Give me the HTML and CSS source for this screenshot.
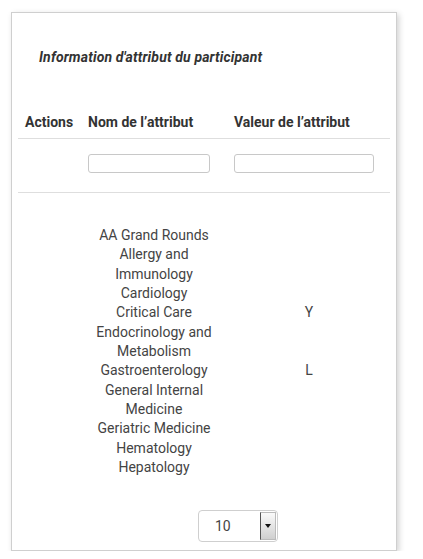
FILE: index.html
```html
<!DOCTYPE html>
<html lang="fr">
<head>
<meta charset="utf-8">
<title>Information d'attribut du participant</title>
<link rel="stylesheet" href="styles.css">
</head>
<body>
<div class="card">
  <h2 class="title">Information d'attribut du participant</h2>
  <div class="table">
    <div class="row head">
      <div class="c c1">Actions</div>
      <div class="c c2">Nom de l’attribut</div>
      <div class="c c3">Valeur de l’attribut</div>
    </div>
    <div class="row filters">
      <div class="c c1"></div>
      <div class="c c2"><input class="inp inp-name" type="text"></div>
      <div class="c c3"><input class="inp inp-val" type="text"></div>
    </div>
    <div class="body">
      <div class="item"><div class="c1"></div><div class="n">AA Grand Rounds</div><div class="v"></div></div>
      <div class="item"><div class="c1"></div><div class="n">Allergy and Immunology</div><div class="v"></div></div>
      <div class="item"><div class="c1"></div><div class="n">Cardiology</div><div class="v"></div></div>
      <div class="item"><div class="c1"></div><div class="n">Critical Care</div><div class="v">Y</div></div>
      <div class="item"><div class="c1"></div><div class="n">Endocrinology and Metabolism</div><div class="v"></div></div>
      <div class="item"><div class="c1"></div><div class="n">Gastroenterology</div><div class="v">L</div></div>
      <div class="item"><div class="c1"></div><div class="n">General Internal Medicine</div><div class="v"></div></div>
      <div class="item"><div class="c1"></div><div class="n">Geriatric Medicine</div><div class="v"></div></div>
      <div class="item"><div class="c1"></div><div class="n">Hematology</div><div class="v"></div></div>
      <div class="item"><div class="c1"></div><div class="n">Hepatology</div><div class="v"></div></div>
    </div>
  </div>
  <div class="pager">
    <div class="select">
      <span class="sel-val">10</span>
      <span class="sel-btn"><span class="arrow"></span></span>
    </div>
  </div>
</div>
</body>
</html>
```
FILE: styles.css
```css
html, body {
  margin: 0;
  padding: 0;
  background: #fff;
}
body {
  font-family: Roboto, "Liberation Sans", sans-serif;
  color: #333;
  font-size: 14px;
}
.card {
  margin: 12px 0 0 11px;
  width: 372px;
  height: 537px;
  border: 1px solid #cfcfcf;
  box-shadow: 2px 2px 6px rgba(0,0,0,0.18);
  padding: 0 6px;
  box-sizing: content-box;
  display: flex;
  flex-direction: column;
}
.title {
  margin: 35px 0 0 21px;
  font-size: 14px;
  line-height: 18px;
  font-style: italic;
  font-weight: bold;
  color: #333;
  letter-spacing: 0.15px;
}
.table {
  margin-top: 38px;
}
.row {
  display: grid;
  grid-template-columns: 64px 146px 1fr;
}
.head {
  border-bottom: 1px solid #dedede;
}
.head .c {
  padding: 9px 6px 6px 7px;
  font-weight: bold;
  font-size: 14px;
  line-height: 19px;
}
.head .c2, .head .c3 {
  padding-left: 6px;
}
.filters {
  border-bottom: 1px solid #dedede;
}
.filters .c {
  padding: 15px 0 19px 6px;
  height: 19px;
}
.inp {
  display: block;
  box-sizing: border-box;
  height: 19px;
  margin: 0;
  border: 1px solid #c8c8c8;
  border-radius: 3px;
  background: #fff;
  padding: 0 4px;
}
.inp-name { width: 122px; }
.inp-val { width: 140px; }
.body {
  padding-top: 33px;
}
.item {
  display: grid;
  grid-template-columns: 64px 146px 1fr;
  line-height: 19.33px;
  font-size: 14px;
  color: #444;
}
.item .n {
  text-align: center;
  padding: 0 10px 0 8px;
}
.item .v {
  text-align: center;
  padding-left: 0;
}
.pager {
  margin-top: 33px;
  display: flex;
  justify-content: center;
  padding-left: 68px;
}
.select {
  box-sizing: border-box;
  width: 80px;
  height: 32px;
  border: 1px solid #cfcfcf;
  border-radius: 4px;
  display: flex;
  align-items: center;
  justify-content: space-between;
  padding: 1px;
}
.sel-val {
  padding-left: 15px;
  font-size: 14px;
  color: #444;
}
.sel-btn {
  width: 16px;
  height: 28px;
  box-sizing: border-box;
  border-left: 1px solid #555;
  border-top: 1px solid #bbb;
  border-right: 1px solid #bbb;
  border-bottom: 1px solid #bbb;
  background: linear-gradient(#fafafa, #cfcfcf);
  display: flex;
  align-items: center;
  justify-content: center;
}
.arrow {
  width: 0;
  height: 0;
  border-left: 3px solid transparent;
  border-right: 3px solid transparent;
  border-top: 4px solid #111;
}
```
